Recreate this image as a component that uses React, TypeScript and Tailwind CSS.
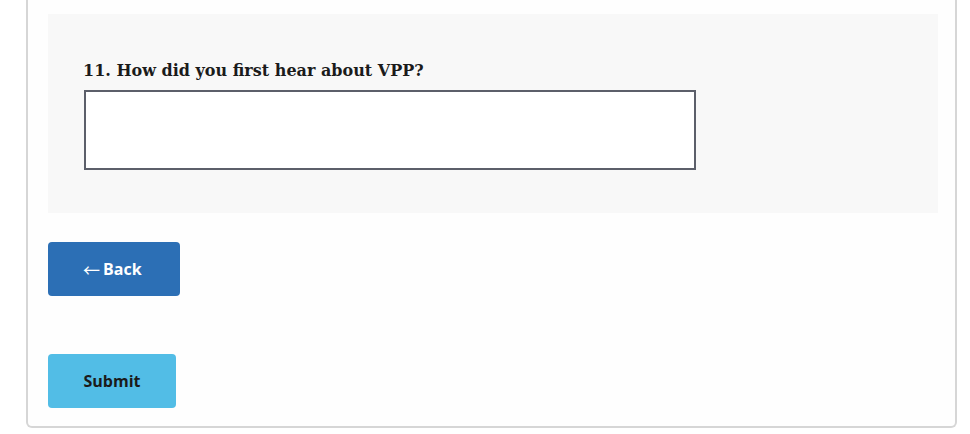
import React from "react";

export default function App() {
  return (
    <div className="w-[970px] h-[434px] bg-white overflow-hidden">
      <div className="ml-[26px] w-[931px] h-[428px] border-2 border-t-0 border-[#d6d6d6] rounded-b-[6px] pl-[20px] pt-[14px] bg-[#fefefe]">
        <div className="w-[890px] h-[199px] bg-[#f8f8f8] pl-[35px] pt-[45px]">
          <label
            className="block text-[16px] leading-[24px] font-bold text-[#1b1b1b]"
            style={{ fontFamily: '"DejaVu Serif", "Liberation Serif", serif' }}
          >
            11. How did you first hear about VPP?
          </label>
          <textarea className="block mt-[7px] ml-px w-[612px] h-[80px] border-2 border-[#5c5f6a] bg-white resize-none outline-none" />
        </div>
        <div
          className="flex flex-col items-start"
          style={{ fontFamily: '"Open Sans", "Liberation Sans", sans-serif' }}
        >
          <button className="mt-[29px] h-[54px] w-[132px] rounded-[4px] bg-[#2c6fb5] text-white font-bold text-[16px] pl-[35px] text-left flex items-center">
            <span
              className="font-normal text-[17px] mr-[3px] leading-none"
              style={{ fontFamily: '"Noto Sans CJK JP", "DejaVu Sans", sans-serif' }}
            >
              ←
            </span>
            <span>Back</span>
          </button>
          <button className="mt-[58px] h-[54px] w-[128px] rounded-[4px] bg-[#52bde6] text-[#1b1b1b] font-bold text-[16px]">
            Submit
          </button>
        </div>
      </div>
    </div>
  );
}
